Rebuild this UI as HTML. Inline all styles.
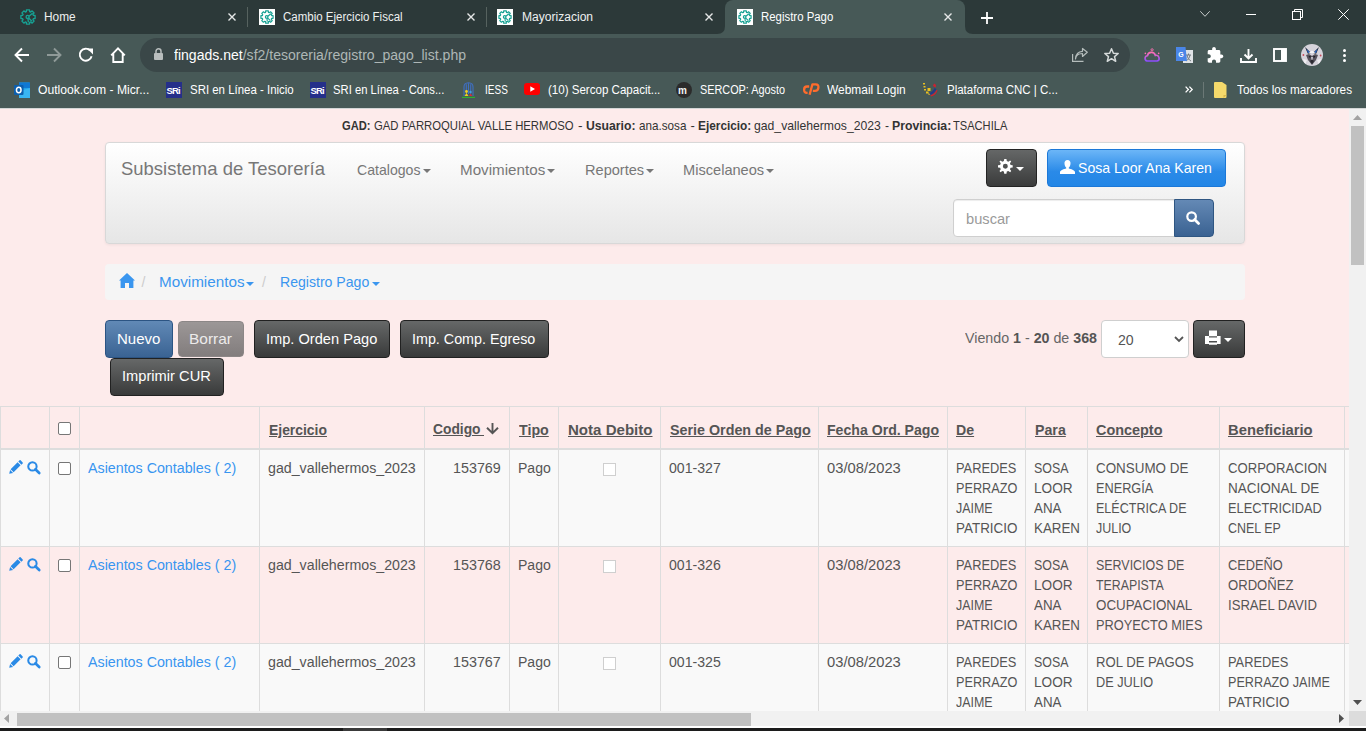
<!DOCTYPE html>
<html><head><meta charset="utf-8">
<style>
*{box-sizing:border-box}
html,body{margin:0;padding:0}
body{width:1366px;height:731px;overflow:hidden;position:relative;font-family:"Liberation Sans",sans-serif;background:#fdebeb}
.a{position:absolute}
.t{position:absolute;white-space:pre;line-height:1;font-family:"Liberation Sans",sans-serif}
svg{position:absolute;overflow:visible}
</style></head>
<body>
<div class="a" style="left:0;top:0;width:1366px;height:34px;background:#2c3939"></div>
<div class="a" style="left:0;top:34px;width:1366px;height:74px;background:#475957"></div>
<div class="a" style="left:725px;top:0;width:240px;height:34px;background:#475957;border-radius:8px 8px 0 0"></div>
<svg style="left:717px;top:26px" width="8" height="8"><path d="M0 8 Q8 8 8 0 L8 8 Z" fill="#475957"/></svg>
<svg style="left:965px;top:26px" width="8" height="8"><path d="M8 8 Q0 8 0 0 L0 8 Z" fill="#475957"/></svg>
<div class="a" style="left:247px;top:7px;width:1px;height:20px;background:#56625f"></div>
<div class="a" style="left:486px;top:7px;width:1px;height:20px;background:#56625f"></div>
<svg style="left:20px;top:9px" width="16" height="16" viewBox="0 0 16 16"><g><g fill="none" stroke="#17a193" stroke-width="1.35" stroke-linejoin="round"><path d="M6.36 2.64 L6.42 0.9 L9.58 0.9 L9.64 2.64 L10.63 3.06 L12.14 1.9 L14.1 3.86 L12.94 5.37 L13.36 6.36 L15.1 6.42 L15.1 9.58 L13.36 9.64 L12.94 10.63 L14.1 12.14 L12.14 14.1 L10.63 12.94 L9.64 13.36 L9.58 15.1 L6.42 15.1 L6.36 13.36 L5.37 12.94 L3.86 14.1 L1.9 12.14 L3.06 10.63 L2.64 9.64 L0.9 9.58 L0.9 6.42 L2.64 6.36 L3.06 5.37 L1.9 3.86 L3.86 1.9 L5.37 3.06 Z"/><circle cx="7.6" cy="7.9" r="1.5"/><path d="M8.9 7.2 L12.6 4.2 M7.9 9.4 L8.4 13.4 M8.6 9 L12 12.2"/></g></g></svg>
<svg style="left:228px;top:13px" width="8" height="8" viewBox="0 0 8 8"><path d="M0.5 0.5 L7.5 7.5 M7.5 0.5 L0.5 7.5" stroke="#e6e8e8" stroke-width="1.4"/></svg>
<svg style="left:259px;top:9px" width="16" height="16" viewBox="0 0 16 16"><rect x="0" y="0" width="16" height="16" fill="#fff"/><g transform="translate(8 8) scale(0.86) translate(-8 -8)"><g fill="none" stroke="#17a193" stroke-width="1.35" stroke-linejoin="round"><path d="M6.36 2.64 L6.42 0.9 L9.58 0.9 L9.64 2.64 L10.63 3.06 L12.14 1.9 L14.1 3.86 L12.94 5.37 L13.36 6.36 L15.1 6.42 L15.1 9.58 L13.36 9.64 L12.94 10.63 L14.1 12.14 L12.14 14.1 L10.63 12.94 L9.64 13.36 L9.58 15.1 L6.42 15.1 L6.36 13.36 L5.37 12.94 L3.86 14.1 L1.9 12.14 L3.06 10.63 L2.64 9.64 L0.9 9.58 L0.9 6.42 L2.64 6.36 L3.06 5.37 L1.9 3.86 L3.86 1.9 L5.37 3.06 Z"/><circle cx="7.6" cy="7.9" r="1.5"/><path d="M8.9 7.2 L12.6 4.2 M7.9 9.4 L8.4 13.4 M8.6 9 L12 12.2"/></g></g></svg>
<svg style="left:467px;top:13px" width="8" height="8" viewBox="0 0 8 8"><path d="M0.5 0.5 L7.5 7.5 M7.5 0.5 L0.5 7.5" stroke="#e6e8e8" stroke-width="1.4"/></svg>
<svg style="left:497px;top:9px" width="16" height="16" viewBox="0 0 16 16"><rect x="0" y="0" width="16" height="16" fill="#fff"/><g transform="translate(8 8) scale(0.86) translate(-8 -8)"><g fill="none" stroke="#17a193" stroke-width="1.35" stroke-linejoin="round"><path d="M6.36 2.64 L6.42 0.9 L9.58 0.9 L9.64 2.64 L10.63 3.06 L12.14 1.9 L14.1 3.86 L12.94 5.37 L13.36 6.36 L15.1 6.42 L15.1 9.58 L13.36 9.64 L12.94 10.63 L14.1 12.14 L12.14 14.1 L10.63 12.94 L9.64 13.36 L9.58 15.1 L6.42 15.1 L6.36 13.36 L5.37 12.94 L3.86 14.1 L1.9 12.14 L3.06 10.63 L2.64 9.64 L0.9 9.58 L0.9 6.42 L2.64 6.36 L3.06 5.37 L1.9 3.86 L3.86 1.9 L5.37 3.06 Z"/><circle cx="7.6" cy="7.9" r="1.5"/><path d="M8.9 7.2 L12.6 4.2 M7.9 9.4 L8.4 13.4 M8.6 9 L12 12.2"/></g></g></svg>
<svg style="left:705px;top:13px" width="8" height="8" viewBox="0 0 8 8"><path d="M0.5 0.5 L7.5 7.5 M7.5 0.5 L0.5 7.5" stroke="#e6e8e8" stroke-width="1.4"/></svg>
<svg style="left:737px;top:9px" width="16" height="16" viewBox="0 0 16 16"><rect x="0" y="0" width="16" height="16" fill="#fff"/><g transform="translate(8 8) scale(0.86) translate(-8 -8)"><g fill="none" stroke="#17a193" stroke-width="1.35" stroke-linejoin="round"><path d="M6.36 2.64 L6.42 0.9 L9.58 0.9 L9.64 2.64 L10.63 3.06 L12.14 1.9 L14.1 3.86 L12.94 5.37 L13.36 6.36 L15.1 6.42 L15.1 9.58 L13.36 9.64 L12.94 10.63 L14.1 12.14 L12.14 14.1 L10.63 12.94 L9.64 13.36 L9.58 15.1 L6.42 15.1 L6.36 13.36 L5.37 12.94 L3.86 14.1 L1.9 12.14 L3.06 10.63 L2.64 9.64 L0.9 9.58 L0.9 6.42 L2.64 6.36 L3.06 5.37 L1.9 3.86 L3.86 1.9 L5.37 3.06 Z"/><circle cx="7.6" cy="7.9" r="1.5"/><path d="M8.9 7.2 L12.6 4.2 M7.9 9.4 L8.4 13.4 M8.6 9 L12 12.2"/></g></g></svg>
<svg style="left:944px;top:13px" width="8" height="8" viewBox="0 0 8 8"><path d="M0.5 0.5 L7.5 7.5 M7.5 0.5 L0.5 7.5" stroke="#e6e8e8" stroke-width="1.4"/></svg>
<svg style="left:981px;top:12px" width="12" height="12" viewBox="0 0 12 12"><path d="M6 0 V12 M0 6 H12" stroke="#fff" stroke-width="1.8"/></svg>
<svg style="left:1200px;top:11px" width="10" height="6" viewBox="0 0 10 6"><path d="M0.3 0.3 L5 5.3 L9.7 0.3" fill="none" stroke="#c8cccc" stroke-width="1"/></svg>
<div class="a" style="left:1246px;top:14px;width:10px;height:1px;background:#fff"></div>
<svg style="left:1292px;top:9px" width="11" height="11" viewBox="0 0 11 11"><rect x="0.5" y="2.5" width="8" height="8" fill="none" stroke="#fff"/><path d="M2.5 2.5 V0.5 H10.5 V8.5 H8.5" fill="none" stroke="#fff"/></svg>
<svg style="left:1338px;top:9px" width="11" height="11" viewBox="0 0 11 11"><path d="M0.3 0.3 L10.7 10.7 M10.7 0.3 L0.3 10.7" stroke="#fff" stroke-width="1"/></svg>
<svg style="left:14px;top:47px" width="16" height="16" viewBox="0 0 16 16"><path d="M15 8 H2 M8 1.5 L1.5 8 L8 14.5" fill="none" stroke="#fff" stroke-width="1.9"/></svg>
<svg style="left:46px;top:47px" width="16" height="16" viewBox="0 0 16 16"><path d="M1 8 H14 M8 1.5 L14.5 8 L8 14.5" fill="none" stroke="#8f9a98" stroke-width="1.9"/></svg>
<svg style="left:78px;top:47px" width="16" height="16" viewBox="0 0 16 16"><path d="M13.6 9.2 A6 6 0 1 1 12.2 3.6" fill="none" stroke="#fff" stroke-width="1.9"/><path d="M9.2 1.6 H15 V7.4 Z" fill="#fff"/></svg>
<svg style="left:110px;top:47px" width="16" height="16" viewBox="0 0 16 16"><path d="M1.2 8.3 L8 1.4 L14.8 8.3 M3.3 6.5 V15 H12.7 V6.5" fill="none" stroke="#fff" stroke-width="1.9" stroke-linejoin="miter"/></svg>
<div class="a" style="left:140px;top:38px;width:990px;height:34px;border-radius:17px;background:#3a4748"></div>
<svg style="left:154px;top:48px" width="9" height="12" viewBox="0 0 9 12"><path d="M2 5 V3.3 A2.5 2.5 0 0 1 7 3.3 V5" fill="none" stroke="#b8bdbd" stroke-width="1.5"/><rect x="0" y="5" width="9" height="7" rx="1" fill="#b8bdbd"/></svg>
<svg style="left:1072px;top:49px" width="16" height="13" viewBox="0 0 16 13"><path d="M0.6 5 V12.4 H11.5" fill="none" stroke="#b5bdbc" stroke-width="1.2"/><path d="M3.5 10 C4 6 7 4.5 10.5 4.5 V7.5 L15.3 3.3 L10.5 -0.5 V2.3 C6 2.5 3.8 5.5 3.5 10 Z" fill="none" stroke="#b5bdbc" stroke-width="1.2" stroke-linejoin="round"/></svg>
<svg style="left:1104px;top:48px" width="15" height="14" viewBox="0 0 15 14"><path d="M7.5 0.8 L9.4 5.2 L14.2 5.5 L10.5 8.6 L11.7 13.3 L7.5 10.7 L3.3 13.3 L4.5 8.6 L0.8 5.5 L5.6 5.2 Z" fill="none" stroke="#d5dada" stroke-width="1.5" stroke-linejoin="round"/></svg>
<svg style="left:1143.5px;top:48.3px" width="16.2" height="14.4" viewBox="0 0 18 16"><defs><linearGradient id="cg" x1="0" y1="0" x2="0" y2="1"><stop offset="0" stop-color="#ff6fb5"/><stop offset="1" stop-color="#8a4dff"/></linearGradient></defs><path d="M3.5 14.5 A3 3 0 0 1 3.8 8.6 A4.5 4.5 0 0 1 12.6 8.3 A3.1 3.1 0 0 1 14.5 14.5 Z" fill="none" stroke="url(#cg)" stroke-width="1.8"/><circle cx="9" cy="2" r="1.2" fill="none" stroke="#ff6fb5" stroke-width="1"/><circle cx="1.5" cy="6" r="0.9" fill="#ff6fb5"/><circle cx="16.3" cy="6" r="0.9" fill="#ff6fb5"/></svg>
<svg style="left:1176px;top:47px" width="17" height="16" viewBox="0 0 17 16"><rect x="7" y="3" width="10" height="13" fill="#dfe3e6"/><path d="M10 8 H15 M12.5 6.5 V8 M11 8 C11.5 11 13 13 15 14 M14 8 C13.5 11 12 13 10 14" stroke="#6b7278" stroke-width="0.9" fill="none"/><path d="M0 0 H9.5 L11 14 H0 Z" fill="#4a86e8"/><text x="2.2" y="10" font-size="7" font-weight="bold" fill="#fff" font-family="Liberation Sans">G</text></svg>
<svg style="left:1207px;top:47px" width="17" height="16" viewBox="1.5 1 22 21.5"><path fill="#fff" d="M20.5 11H19V7c0-1.1-.9-2-2-2h-4V3.5C13 2.12 11.88 1 10.5 1S8 2.12 8 3.5V5H4c-1.1 0-1.99.9-1.99 2v3.8H3.5c1.49 0 2.7 1.21 2.7 2.7s-1.21 2.7-2.7 2.7H2V20c0 1.1.9 2 2 2h3.8v-1.5c0-1.490 1.21-2.7 2.7-2.7 1.49 0 2.7 1.21 2.7 2.7V22H17c1.1 0 2-.9 2-2v-4h1.5c1.38 0 2.5-1.12 2.5-2.5S21.88 11 20.5 11z"/></svg>
<svg style="left:1240px;top:49px" width="17" height="14" viewBox="0 0 17 14"><path d="M8.5 0 V9 M4.5 5.5 L8.5 9.5 L12.5 5.5" fill="none" stroke="#fff" stroke-width="1.9"/><path d="M1 9 V13 H16 V9" fill="none" stroke="#fff" stroke-width="1.9"/></svg>
<svg style="left:1273px;top:48px" width="14" height="14" viewBox="0 0 14 14"><rect x="1" y="1" width="12" height="12" fill="none" stroke="#fff" stroke-width="1.9"/><rect x="8" y="1" width="5" height="12" fill="#fff"/></svg>
<svg style="left:1301px;top:44px" width="22" height="22" viewBox="0 0 22 22"><defs><clipPath id="avc"><circle cx="11" cy="11" r="11"/></clipPath></defs><g clip-path="url(#avc)"><rect width="22" height="22" fill="#d6d3db"/><path d="M4 3 L10 9 L7 10 Z" fill="#101828"/><path d="M18 3 L12 9 L15 10 Z" fill="#101828"/><path d="M5.5 5 L9 8.5 L7 9 Z" fill="#2f6fd0"/><path d="M16.5 5 L13 8.5 L15 9 Z" fill="#2f6fd0"/><path d="M11 6.5 L15 9.5 L11 9 L7 9.5 Z" fill="#f4f4f6"/><path d="M5 11 L8 10 L11 12 L14 10 L17 11 L15 16 L11 21 L7 16 Z" fill="#55525c"/><path d="M7.5 12 L10 12.5 L9 14 Z M14.5 12 L12 12.5 L13 14 Z" fill="#14141a"/><path d="M10 13 H12 L11.5 16 H10.5 Z" fill="#c9c6cf"/><path d="M9 17 L11 15.5 L13 17 L11 20 Z" fill="#2c2a32"/><path d="M2 15 L6 16 L4 21 Z M20 15 L16 16 L18 21 Z" fill="#f0eef2"/><circle cx="2.4" cy="11" r="0.9" fill="#c84a5a"/><circle cx="19.6" cy="11.5" r="0.9" fill="#c84a5a"/></g></svg>
<div class="a" style="left:1343px;top:49px;width:3px;height:3px;border-radius:50%;background:#fff"></div>
<div class="a" style="left:1343px;top:54px;width:3px;height:3px;border-radius:50%;background:#fff"></div>
<div class="a" style="left:1343px;top:59px;width:3px;height:3px;border-radius:50%;background:#fff"></div>
<svg style="left:14px;top:82px" width="16" height="16" viewBox="0 0 16 16"><path d="M5 0.5 H15 Q16 0.5 16 1.5 V15 Q16 16 15 16 H6 Q5 16 5 15 Z" fill="#1fa1e8"/><path d="M5 0.5 H16 V6 H5 Z" fill="#0f78d4"/><path d="M5 9 L16 6 V16 H5 Z" fill="#39b5f2"/><rect x="0" y="3" width="9.5" height="10" rx="1" fill="#0c5fae"/><ellipse cx="4.75" cy="8" rx="2.3" ry="2.7" fill="none" stroke="#fff" stroke-width="1.5"/></svg>
<svg style="left:166px;top:82px" width="16" height="16" viewBox="0 0 16 16"><rect x="0" y="0" width="16" height="16" fill="#252f8a"/><text x="0.4" y="11.8" font-size="9.5" font-weight="bold" fill="#fff" font-family="Liberation Sans" letter-spacing="-0.8">SRi</text></svg>
<svg style="left:310px;top:82px" width="16" height="16" viewBox="0 0 16 16"><rect x="0" y="0" width="16" height="16" fill="#252f8a"/><text x="0.4" y="11.8" font-size="9.5" font-weight="bold" fill="#fff" font-family="Liberation Sans" letter-spacing="-0.8">SRi</text></svg>
<svg style="left:462px;top:82px" width="13" height="16" viewBox="0 0 13 16"><path d="M2 14 V5 Q2 1 6.5 0.8 Q11 1 11 5 V14" fill="none" stroke="#3f6fc4" stroke-width="1.1"/><path d="M4.3 12 V2.2 M6.5 12 V1.2 M8.7 12 V2.2" stroke="#3f6fc4" stroke-width="1.1"/><circle cx="4.5" cy="9.5" r="1.4" fill="#f0d020"/><path d="M2.5 14 L4.5 11 L6.5 14 Z" fill="#f0d020"/><circle cx="8.5" cy="10" r="1.2" fill="#40a0e0"/><path d="M6.8 14 L8.5 11.5 L10.5 14 Z" fill="#d03040"/><rect x="0" y="14.8" width="13" height="1.2" fill="#30b030"/></svg>
<svg style="left:524px;top:83px" width="16" height="12" viewBox="0 0 16 12"><rect x="0" y="0" width="16" height="12" rx="3" fill="#ff0000"/><path d="M6.3 3.3 L11 6 L6.3 8.7 Z" fill="#fff"/></svg>
<svg style="left:676px;top:82px" width="16" height="16" viewBox="0 0 16 16"><circle cx="8" cy="8" r="8" fill="#2b2b2b"/><text x="2" y="11.8" font-size="10" font-weight="bold" fill="#f3f3f3" font-family="Liberation Sans">m</text></svg>
<svg style="left:803px;top:83px" width="17" height="13" viewBox="0 0 17 13"><path d="M6.2 3.5 H4 Q1.2 3.5 1.1 6.6 Q1 9.8 3.8 9.8 H4.6 M6.6 11.8 L9.4 1.4 H12.8 Q15.8 1.4 15.4 4.6 Q15 7.9 12 7.9 H9.8" fill="none" stroke="#ff6c2c" stroke-width="2.3" stroke-linejoin="round"/></svg>
<svg style="left:922px;top:82px" width="16" height="16" viewBox="0 0 16 16"><g fill="#e8c020"><rect x="1" y="1" width="2" height="1.5"/><rect x="1.5" y="4" width="2" height="1.5"/><rect x="2" y="7" width="2" height="1.5"/><rect x="4" y="9.5" width="2.5" height="2"/><rect x="5.5" y="6" width="3" height="3"/><rect x="6.5" y="11" width="2" height="2"/></g><path d="M12 1.5 Q15 2.5 13.5 5.5 L11 4 Z" fill="#d02030"/><path d="M8 13 Q12 12 14.5 7 L12.5 6 Q10.5 10.5 7 11 Z" fill="#223a8c"/><path d="M9 14.5 Q13.5 13.5 15.5 8.5 L14.5 8 Q12.5 12.5 8.5 13.2 Z" fill="#d02030"/></svg>
<svg style="left:1185px;top:86px" width="8" height="7" viewBox="0 0 8 7"><path d="M0.6 0.6 L3.4 3.5 L0.6 6.4 M4.4 0.6 L7.2 3.5 L4.4 6.4" fill="none" stroke="#fff" stroke-width="1.3"/></svg>
<div class="a" style="left:1203px;top:82px;width:1px;height:16px;background:#6b7876"></div>
<svg style="left:1214px;top:82px" width="13" height="16" viewBox="0 0 13 16"><path d="M0 1 Q0 0 1 0 H8 L12.5 3 V15 Q12.5 16 11.5 16 H1 Q0 16 0 15 Z" fill="#f5d96b"/><path d="M9.5 16 V13 H12.5" fill="#d9b84a"/></svg>
<div class="a" style="left:0;top:108px;width:1366px;height:1px;background:#d3d6d6"></div>
<div class="a" style="left:0;top:109px;width:1349px;height:602px;background:#fdebeb"></div>
<div class="a" style="left:105px;top:142px;width:1140px;height:102px;border:1px solid #d8d8d8;border-radius:4px;background:linear-gradient(#ffffff,#e6e6e6);box-shadow:0 1px 3px rgba(0,0,0,0.06)"></div>
<svg style="left:423.3px;top:169px" width="8" height="4" viewBox="0 0 8 4"><path d="M0 0 H8 L4 4 Z" fill="#777"/></svg>
<svg style="left:547px;top:169px" width="8" height="4" viewBox="0 0 8 4"><path d="M0 0 H8 L4 4 Z" fill="#777"/></svg>
<svg style="left:646px;top:169px" width="8" height="4" viewBox="0 0 8 4"><path d="M0 0 H8 L4 4 Z" fill="#777"/></svg>
<svg style="left:766px;top:169px" width="8" height="4" viewBox="0 0 8 4"><path d="M0 0 H8 L4 4 Z" fill="#777"/></svg>
<div class="a" style="left:986px;top:149px;width:51px;height:38px;border:1px solid #232323;border-radius:4px;background:linear-gradient(#656767,#3a3b3b)"></div>
<svg style="left:998.2px;top:159.3px" width="14.7" height="14.7" viewBox="0 0 16 16"><path fill="#fff" fill-rule="evenodd" d="M6.8 0 H9.2 L9.6 2.3 L11.3 3 L13.2 1.6 L14.4 2.8 L13 4.7 L13.7 6.4 L16 6.8 V9.2 L13.7 9.6 L13 11.3 L14.4 13.2 L13.2 14.4 L11.3 13 L9.6 13.7 L9.2 16 H6.8 L6.4 13.7 L4.7 13 L2.8 14.4 L1.6 13.2 L3 11.3 L2.3 9.6 L0 9.2 V6.8 L2.3 6.4 L3 4.7 L1.6 2.8 L2.8 1.6 L4.7 3 L6.4 2.3 Z M8 5.3 A2.7 2.7 0 1 0 8 10.7 A2.7 2.7 0 1 0 8 5.3 Z"/></svg>
<svg style="left:1016px;top:167px" width="8" height="4" viewBox="0 0 8 4"><path d="M0 0 H8 L4 4 Z" fill="#fff"/></svg>
<div class="a" style="left:1047px;top:149px;width:179px;height:38px;border:1px solid #1b78d8;border-radius:4px;background:linear-gradient(#6cb6f7,#2a8ae8 60%,#2286e6)"></div>
<svg style="left:1060px;top:160px" width="15" height="14" viewBox="0 0 15 14"><path fill="#fff" d="M7.5 0 C5.2 0 4.3 1.8 4.5 3.8 C4.6 5.6 5.5 7.2 6.2 7.6 V8.6 C4 9.2 0.4 10.2 0 12 V14 H15 V12 C14.6 10.2 11 9.2 8.8 8.6 V7.6 C9.5 7.2 10.4 5.6 10.5 3.8 C10.7 1.8 9.8 0 7.5 0 Z"/></svg>
<div class="a" style="left:953px;top:199px;width:222px;height:38px;border:1px solid #cfcfcf;border-radius:4px 0 0 4px;background:#fff;box-shadow:inset 0 1px 1px rgba(0,0,0,.075)"></div>
<div class="a" style="left:1174px;top:199px;width:40px;height:38px;border:1px solid #2f5682;border-radius:0 4px 4px 0;background:linear-gradient(#6489b5,#3a6292)"></div>
<svg style="left:1186px;top:211px" width="15.0" height="13.0" viewBox="0 0 15 13"><circle cx="5.6" cy="5.6" r="4.3" fill="none" stroke="#fff" stroke-width="2.2"/><path d="M8.6 8.6 L12.6 12.4" stroke="#fff" stroke-width="2.8" stroke-linecap="round"/></svg>
<div class="a" style="left:105px;top:264px;width:1140px;height:36px;border-radius:4px;background:#f5f5f5"></div>
<svg style="left:119px;top:273px" width="16" height="15" viewBox="0 0 16 15"><path fill="#3a96ef" d="M8 0 L16 7.6 L14.4 7.6 V15 H10 V10 H6 V15 H1.6 V7.6 H0 Z"/></svg>
<svg style="left:245.5px;top:282px" width="8" height="4" viewBox="0 0 8 4"><path d="M0 0 H8 L4 4 Z" fill="#3a96ef"/></svg>
<svg style="left:372px;top:282px" width="8" height="4" viewBox="0 0 8 4"><path d="M0 0 H8 L4 4 Z" fill="#3a96ef"/></svg>
<div class="a" style="left:105px;top:320px;width:68px;height:38px;border:1px solid #2c5483;border-radius:4px;background:linear-gradient(#6189b6,#3a6393)"></div>
<div class="a" style="left:178px;top:321px;width:66px;height:36px;border:1px solid #8c8787;border-radius:4px;background:linear-gradient(#9c9797,#827d7d)"></div>
<div class="a" style="left:254px;top:320px;width:136px;height:38px;border:1px solid #212121;border-radius:4px;background:linear-gradient(#666868,#393a3a)"></div>
<div class="a" style="left:400px;top:320px;width:149px;height:38px;border:1px solid #212121;border-radius:4px;background:linear-gradient(#666868,#393a3a)"></div>
<div class="a" style="left:110px;top:358px;width:114px;height:38px;border:1px solid #212121;border-radius:4px;background:linear-gradient(#666868,#393a3a)"></div>
<div class="a" style="left:1101px;top:320px;width:88px;height:38px;border:1px solid #cfcfcf;border-radius:4px;background:#fff"></div>
<svg style="left:1174px;top:336px" width="10" height="6" viewBox="0 0 10 6"><path d="M1 1 L5 5 L9 1" fill="none" stroke="#555" stroke-width="1.8"/></svg>
<div class="a" style="left:1193px;top:320px;width:52px;height:38px;border:1px solid #212121;border-radius:4px;background:linear-gradient(#666868,#393a3a)"></div>
<svg style="left:1205px;top:330px" width="16" height="15" viewBox="0 0 16 15"><path fill="#fff" fill-rule="evenodd" d="M4 0.6 H12 V6 H15.6 V14 H12 V14.8 H4 V14 H0 V6 H4 Z M4 6.3 V7.6 H12 V6.3 Z M4 11 V12.5 H12 V11 Z"/></svg>
<svg style="left:1224px;top:338px" width="8" height="4" viewBox="0 0 8 4"><path d="M0 0 H8 L4 4 Z" fill="#fff"/></svg>
<div class="a" style="left:0;top:450px;width:1349px;height:96px;background:#f9f9f9"></div>
<div class="a" style="left:0;top:644px;width:1349px;height:67px;background:#f9f9f9"></div>
<div class="a" style="left:0;top:406px;width:1349px;height:1px;background:#dddddd"></div>
<div class="a" style="left:0;top:448px;width:1349px;height:2px;background:#dddddd"></div>
<div class="a" style="left:0;top:546px;width:1349px;height:1px;background:#dddddd"></div>
<div class="a" style="left:0;top:643px;width:1349px;height:1px;background:#dddddd"></div>
<div class="a" style="left:0px;top:406px;width:1px;height:305px;background:#dddddd"></div>
<div class="a" style="left:49px;top:406px;width:1px;height:305px;background:#dddddd"></div>
<div class="a" style="left:79px;top:406px;width:1px;height:305px;background:#dddddd"></div>
<div class="a" style="left:259px;top:406px;width:1px;height:305px;background:#dddddd"></div>
<div class="a" style="left:424px;top:406px;width:1px;height:305px;background:#dddddd"></div>
<div class="a" style="left:509px;top:406px;width:1px;height:305px;background:#dddddd"></div>
<div class="a" style="left:558px;top:406px;width:1px;height:305px;background:#dddddd"></div>
<div class="a" style="left:660px;top:406px;width:1px;height:305px;background:#dddddd"></div>
<div class="a" style="left:818px;top:406px;width:1px;height:305px;background:#dddddd"></div>
<div class="a" style="left:947px;top:406px;width:1px;height:305px;background:#dddddd"></div>
<div class="a" style="left:1025px;top:406px;width:1px;height:305px;background:#dddddd"></div>
<div class="a" style="left:1087px;top:406px;width:1px;height:305px;background:#dddddd"></div>
<div class="a" style="left:1219px;top:406px;width:1px;height:305px;background:#dddddd"></div>
<div class="a" style="left:1344px;top:406px;width:1px;height:305px;background:#dddddd"></div>
<div class="a" style="left:58px;top:422px;width:13px;height:13px;border:1px solid #767676;border-radius:2px;background:#fff"></div>
<div class="a" style="left:479px;top:435px;width:5px;height:1px;background:#555"></div>
<svg style="left:486px;top:423px" width="13" height="11" viewBox="0 0 13 11"><path d="M6.5 0 V10 M1 4.8 L6.5 10.2 L12 4.8" fill="none" stroke="#555" stroke-width="1.9"/></svg>
<svg style="left:8.6px;top:460px" width="15" height="14" viewBox="0 0 15 14"><path fill="#2a8ae6" d="M0.2 13.8 L1.1 9.9 L4.1 12.9 Z M1.6 9.3 L8.6 2.3 L11.6 5.3 L4.6 12.3 Z M9.3 1.6 L10.6 0.3 Q11.1 -0.1 11.6 0.3 L13.7 2.4 Q14.1 2.9 13.7 3.4 L12.4 4.7 Z"/></svg>
<svg style="left:27.2px;top:460.6px" width="14.549999999999999" height="12.61" viewBox="0 0 15 13"><circle cx="5.6" cy="5.6" r="4.3" fill="none" stroke="#2a8ae6" stroke-width="2.1"/><path d="M8.6 8.6 L12.6 12.4" stroke="#2a8ae6" stroke-width="2.8" stroke-linecap="round"/></svg>
<div class="a" style="left:58px;top:462px;width:13px;height:13px;border:1px solid #767676;border-radius:2px;background:#fff"></div>
<div class="a" style="left:603px;top:462.5px;width:13px;height:13px;border:1px solid #cfcfcf;background:#fff"></div>
<svg style="left:8.6px;top:557px" width="15" height="14" viewBox="0 0 15 14"><path fill="#2a8ae6" d="M0.2 13.8 L1.1 9.9 L4.1 12.9 Z M1.6 9.3 L8.6 2.3 L11.6 5.3 L4.6 12.3 Z M9.3 1.6 L10.6 0.3 Q11.1 -0.1 11.6 0.3 L13.7 2.4 Q14.1 2.9 13.7 3.4 L12.4 4.7 Z"/></svg>
<svg style="left:27.2px;top:557.6px" width="14.549999999999999" height="12.61" viewBox="0 0 15 13"><circle cx="5.6" cy="5.6" r="4.3" fill="none" stroke="#2a8ae6" stroke-width="2.1"/><path d="M8.6 8.6 L12.6 12.4" stroke="#2a8ae6" stroke-width="2.8" stroke-linecap="round"/></svg>
<div class="a" style="left:58px;top:559px;width:13px;height:13px;border:1px solid #767676;border-radius:2px;background:#fff"></div>
<div class="a" style="left:603px;top:559.5px;width:13px;height:13px;border:1px solid #cfcfcf;background:#fff"></div>
<svg style="left:8.6px;top:654px" width="15" height="14" viewBox="0 0 15 14"><path fill="#2a8ae6" d="M0.2 13.8 L1.1 9.9 L4.1 12.9 Z M1.6 9.3 L8.6 2.3 L11.6 5.3 L4.6 12.3 Z M9.3 1.6 L10.6 0.3 Q11.1 -0.1 11.6 0.3 L13.7 2.4 Q14.1 2.9 13.7 3.4 L12.4 4.7 Z"/></svg>
<svg style="left:27.2px;top:654.6px" width="14.549999999999999" height="12.61" viewBox="0 0 15 13"><circle cx="5.6" cy="5.6" r="4.3" fill="none" stroke="#2a8ae6" stroke-width="2.1"/><path d="M8.6 8.6 L12.6 12.4" stroke="#2a8ae6" stroke-width="2.8" stroke-linecap="round"/></svg>
<div class="a" style="left:58px;top:656px;width:13px;height:13px;border:1px solid #767676;border-radius:2px;background:#fff"></div>
<div class="a" style="left:603px;top:656.5px;width:13px;height:13px;border:1px solid #cfcfcf;background:#fff"></div>
<span class="t" style="left:44.30px;top:11px;font-size:12px;font-weight:400;color:#eef0f0;transform:scaleX(0.9896);transform-origin:0 0;">Home</span>
<span class="t" style="left:283.30px;top:11px;font-size:12px;font-weight:400;color:#eef0f0;transform:scaleX(0.9594);transform-origin:0 0;">Cambio Ejercicio Fiscal</span>
<span class="t" style="left:522.00px;top:11px;font-size:12px;font-weight:400;color:#eef0f0;transform:scaleX(1.0054);transform-origin:0 0;">Mayorizacion</span>
<span class="t" style="left:761.30px;top:11px;font-size:12px;font-weight:400;color:#ffffff;transform:scaleX(0.9506);transform-origin:0 0;">Registro Pago</span>
<span class="t" style="left:174.20px;top:48px;font-size:14px;font-weight:400;color:#ffffff;transform:scaleX(1.0032);transform-origin:0 0;">fingads.net<span style="color:#aeb7b6">/sf2/tesoreria/registro_pago_list.php</span></span>
<span class="t" style="left:37.70px;top:84px;font-size:12px;font-weight:400;color:#ffffff;transform:scaleX(1.0120);transform-origin:0 0;">Outlook.com - Micr...</span>
<span class="t" style="left:189.60px;top:84px;font-size:12px;font-weight:400;color:#ffffff;transform:scaleX(0.9537);transform-origin:0 0;">SRI en Línea - Inicio</span>
<span class="t" style="left:333.30px;top:84px;font-size:12px;font-weight:400;color:#ffffff;transform:scaleX(0.9375);transform-origin:0 0;">SRI en Línea - Cons...</span>
<span class="t" style="left:484.56px;top:84px;font-size:12px;font-weight:400;color:#ffffff;transform:scaleX(0.8352);transform-origin:0 0;">IESS</span>
<span class="t" style="left:547.60px;top:84px;font-size:12px;font-weight:400;color:#ffffff;transform:scaleX(0.9623);transform-origin:0 0;">(10) Sercop Capacit...</span>
<span class="t" style="left:699.80px;top:84px;font-size:12px;font-weight:400;color:#ffffff;transform:scaleX(0.9050);transform-origin:0 0;">SERCOP: Agosto</span>
<span class="t" style="left:827.00px;top:84px;font-size:12px;font-weight:400;color:#ffffff;transform:scaleX(0.9939);transform-origin:0 0;">Webmail Login</span>
<span class="t" style="left:947.00px;top:84px;font-size:12px;font-weight:400;color:#ffffff;transform:scaleX(0.9578);transform-origin:0 0;">Plataforma CNC | C...</span>
<span class="t" style="left:1237.00px;top:84px;font-size:12px;font-weight:400;color:#ffffff;transform:scaleX(0.9797);transform-origin:0 0;">Todos los marcadores</span>
<span class="t" style="left:341.50px;top:119px;font-size:13px;font-weight:700;color:#333;transform:scaleX(0.8575);transform-origin:0 0;">GAD:</span>
<span class="t" style="left:374.00px;top:119px;font-size:13px;font-weight:400;color:#333;transform:scaleX(0.8697);transform-origin:0 0;">GAD PARROQUIAL VALLE HERMOSO</span>
<span class="t" style="left:577.90px;top:119px;font-size:13px;font-weight:400;color:#333;transform:scaleX(1.0500);transform-origin:0 0;">-</span>
<span class="t" style="left:585.90px;top:119px;font-size:13px;font-weight:700;color:#333;transform:scaleX(0.9389);transform-origin:0 0;">Usuario:</span>
<span class="t" style="left:639.00px;top:119px;font-size:13px;font-weight:400;color:#333;transform:scaleX(0.8985);transform-origin:0 0;">ana.sosa</span>
<span class="t" style="left:690.40px;top:119px;font-size:13px;font-weight:400;color:#333;transform:scaleX(1.0000);transform-origin:0 0;">-</span>
<span class="t" style="left:697.70px;top:119px;font-size:13px;font-weight:700;color:#333;transform:scaleX(0.9107);transform-origin:0 0;">Ejercicio:</span>
<span class="t" style="left:754.00px;top:119px;font-size:13px;font-weight:400;color:#333;transform:scaleX(0.9383);transform-origin:0 0;">gad_vallehermos_2023</span>
<span class="t" style="left:884.70px;top:119px;font-size:13px;font-weight:400;color:#333;transform:scaleX(0.9250);transform-origin:0 0;">-</span>
<span class="t" style="left:891.60px;top:119px;font-size:13px;font-weight:700;color:#333;transform:scaleX(0.9420);transform-origin:0 0;">Provincia:</span>
<span class="t" style="left:953.10px;top:119px;font-size:13px;font-weight:400;color:#333;transform:scaleX(0.8544);transform-origin:0 0;">TSACHILA</span>
<span class="t" style="left:120.60px;top:160px;font-size:18.6px;font-weight:400;color:#777;transform:scaleX(0.9936);transform-origin:0 0;">Subsistema de Tesorería</span>
<span class="t" style="left:356.90px;top:162px;font-size:15px;font-weight:400;color:#777;transform:scaleX(0.9397);transform-origin:0 0;">Catalogos</span>
<span class="t" style="left:459.99px;top:162px;font-size:15px;font-weight:400;color:#777;transform:scaleX(1.0122);transform-origin:0 0;">Movimientos</span>
<span class="t" style="left:584.93px;top:162px;font-size:15px;font-weight:400;color:#777;transform:scaleX(0.9720);transform-origin:0 0;">Reportes</span>
<span class="t" style="left:683.03px;top:162px;font-size:15px;font-weight:400;color:#777;transform:scaleX(0.9735);transform-origin:0 0;">Miscelaneos</span>
<span class="t" style="left:1077.90px;top:160px;font-size:15px;font-weight:400;color:#fff;transform:scaleX(0.9393);transform-origin:0 0;">Sosa Loor Ana Karen</span>
<span class="t" style="left:965.50px;top:211px;font-size:15px;font-weight:400;color:#9a9a9a;transform:scaleX(0.9772);transform-origin:0 0;">buscar</span>
<span class="t" style="left:141.50px;top:275px;font-size:14px;font-weight:400;color:#cccccc;">/</span>
<span class="t" style="left:158.98px;top:274px;font-size:15px;font-weight:400;color:#3a96ef;transform:scaleX(1.0158);transform-origin:0 0;">Movimientos</span>
<span class="t" style="left:262.00px;top:275px;font-size:14px;font-weight:400;color:#cccccc;">/</span>
<span class="t" style="left:279.56px;top:274px;font-size:15px;font-weight:400;color:#3a96ef;transform:scaleX(0.9391);transform-origin:0 0;">Registro Pago</span>
<span class="t" style="left:116.60px;top:331px;font-size:15px;font-weight:400;color:#fff;transform:scaleX(0.9996);transform-origin:0 0;">Nuevo</span>
<span class="t" style="left:188.57px;top:331px;font-size:15px;font-weight:400;color:#ecebeb;transform:scaleX(1.0325);transform-origin:0 0;">Borrar</span>
<span class="t" style="left:265.53px;top:331px;font-size:15px;font-weight:400;color:#fff;transform:scaleX(0.9744);transform-origin:0 0;">Imp. Orden Pago</span>
<span class="t" style="left:412.45px;top:331px;font-size:15px;font-weight:400;color:#fff;transform:scaleX(0.9541);transform-origin:0 0;">Imp. Comp. Egreso</span>
<span class="t" style="left:121.62px;top:368px;font-size:15px;font-weight:400;color:#fff;transform:scaleX(0.9779);transform-origin:0 0;">Imprimir CUR</span>
<span class="t" style="left:965.20px;top:331px;font-size:14.5px;font-weight:400;color:#666;transform:scaleX(0.9820);transform-origin:0 0;">Viendo <b style="color:#555">1</b> - <b style="color:#555">20</b> de <b style="color:#555">368</b></span>
<span class="t" style="left:1118.40px;top:332px;font-size:15px;font-weight:400;color:#555;transform:scaleX(0.9423);transform-origin:0 0;">20</span>
<span class="t" style="left:268.60px;top:423px;font-size:14px;font-weight:700;color:#555;transform:scaleX(0.9928);transform-origin:0 0;text-decoration:underline;">Ejercicio</span>
<span class="t" style="left:433.20px;top:422px;font-size:14px;font-weight:700;color:#555;transform:scaleX(0.9862);transform-origin:0 0;text-decoration:underline;">Codigo</span>
<span class="t" style="left:518.60px;top:423px;font-size:14px;font-weight:700;color:#555;transform:scaleX(1.0160);transform-origin:0 0;text-decoration:underline;">Tipo</span>
<span class="t" style="left:568.00px;top:423px;font-size:14px;font-weight:700;color:#555;transform:scaleX(1.0756);transform-origin:0 0;text-decoration:underline;">Nota Debito</span>
<span class="t" style="left:669.50px;top:423px;font-size:14px;font-weight:700;color:#555;transform:scaleX(1.0214);transform-origin:0 0;text-decoration:underline;">Serie Orden de Pago</span>
<span class="t" style="left:827.20px;top:423px;font-size:14px;font-weight:700;color:#555;transform:scaleX(1.0073);transform-origin:0 0;text-decoration:underline;">Fecha Ord. Pago</span>
<span class="t" style="left:956.20px;top:423px;font-size:14px;font-weight:700;color:#555;transform:scaleX(1.0105);transform-origin:0 0;text-decoration:underline;">De</span>
<span class="t" style="left:1034.60px;top:423px;font-size:14px;font-weight:700;color:#555;transform:scaleX(1.0140);transform-origin:0 0;text-decoration:underline;">Para</span>
<span class="t" style="left:1095.90px;top:423px;font-size:14px;font-weight:700;color:#555;transform:scaleX(1.0297);transform-origin:0 0;text-decoration:underline;">Concepto</span>
<span class="t" style="left:1228.30px;top:423px;font-size:14px;font-weight:700;color:#555;transform:scaleX(1.0555);transform-origin:0 0;text-decoration:underline;">Beneficiario</span>
<span class="t" style="left:88.10px;top:461px;font-size:14px;font-weight:400;color:#3895f0;transform:scaleX(1.0183);transform-origin:0 0;">Asientos Contables ( 2)</span>
<span class="t" style="left:268.00px;top:461px;font-size:14px;font-weight:400;color:#555;transform:scaleX(1.0153);transform-origin:0 0;">gad_vallehermos_2023</span>
<span class="t" style="left:452.98px;top:461px;font-size:14px;font-weight:400;color:#555;transform:scaleX(1.0233);transform-origin:0 0;">153769</span>
<span class="t" style="left:517.50px;top:461px;font-size:14px;font-weight:400;color:#555;transform:scaleX(1.0028);transform-origin:0 0;">Pago</span>
<span class="t" style="left:669.40px;top:461px;font-size:14px;font-weight:400;color:#555;transform:scaleX(1.0079);transform-origin:0 0;">001-327</span>
<span class="t" style="left:826.60px;top:461px;font-size:14px;font-weight:400;color:#555;transform:scaleX(1.0529);transform-origin:0 0;">03/08/2023</span>
<span class="t" style="left:956.00px;top:461px;font-size:14px;font-weight:400;color:#555;transform:scaleX(0.9174);transform-origin:0 0;">PAREDES</span>
<span class="t" style="left:956.00px;top:481px;font-size:14px;font-weight:400;color:#555;transform:scaleX(0.9074);transform-origin:0 0;">PERRAZO</span>
<span class="t" style="left:956.00px;top:501px;font-size:14px;font-weight:400;color:#555;transform:scaleX(0.8878);transform-origin:0 0;">JAIME</span>
<span class="t" style="left:956.00px;top:521px;font-size:14px;font-weight:400;color:#555;transform:scaleX(0.9596);transform-origin:0 0;">PATRICIO</span>
<span class="t" style="left:1034.00px;top:461px;font-size:14px;font-weight:400;color:#555;transform:scaleX(0.8846);transform-origin:0 0;">SOSA</span>
<span class="t" style="left:1034.00px;top:481px;font-size:14px;font-weight:400;color:#555;transform:scaleX(0.9724);transform-origin:0 0;">LOOR</span>
<span class="t" style="left:1034.00px;top:501px;font-size:14px;font-weight:400;color:#555;transform:scaleX(0.9508);transform-origin:0 0;">ANA</span>
<span class="t" style="left:1034.00px;top:521px;font-size:14px;font-weight:400;color:#555;transform:scaleX(0.9539);transform-origin:0 0;">KAREN</span>
<span class="t" style="left:1096.00px;top:461px;font-size:14px;font-weight:400;color:#555;transform:scaleX(0.9572);transform-origin:0 0;">CONSUMO DE</span>
<span class="t" style="left:1096.00px;top:481px;font-size:14px;font-weight:400;color:#555;transform:scaleX(0.9094);transform-origin:0 0;">ENERGÍA</span>
<span class="t" style="left:1096.00px;top:501px;font-size:14px;font-weight:400;color:#555;transform:scaleX(0.8949);transform-origin:0 0;">ELÉCTRICA DE</span>
<span class="t" style="left:1096.00px;top:521px;font-size:14px;font-weight:400;color:#555;transform:scaleX(0.8898);transform-origin:0 0;">JULIO</span>
<span class="t" style="left:1228.00px;top:461px;font-size:14px;font-weight:400;color:#555;transform:scaleX(0.9362);transform-origin:0 0;">CORPORACION</span>
<span class="t" style="left:1228.00px;top:481px;font-size:14px;font-weight:400;color:#555;transform:scaleX(0.9661);transform-origin:0 0;">NACIONAL DE</span>
<span class="t" style="left:1228.00px;top:501px;font-size:14px;font-weight:400;color:#555;transform:scaleX(0.9136);transform-origin:0 0;">ELECTRICIDAD</span>
<span class="t" style="left:1228.00px;top:521px;font-size:14px;font-weight:400;color:#555;transform:scaleX(0.8897);transform-origin:0 0;">CNEL EP</span>
<span class="t" style="left:88.10px;top:558px;font-size:14px;font-weight:400;color:#3895f0;transform:scaleX(1.0183);transform-origin:0 0;">Asientos Contables ( 2)</span>
<span class="t" style="left:268.00px;top:558px;font-size:14px;font-weight:400;color:#555;transform:scaleX(1.0153);transform-origin:0 0;">gad_vallehermos_2023</span>
<span class="t" style="left:452.98px;top:558px;font-size:14px;font-weight:400;color:#555;transform:scaleX(1.0233);transform-origin:0 0;">153768</span>
<span class="t" style="left:517.50px;top:558px;font-size:14px;font-weight:400;color:#555;transform:scaleX(1.0028);transform-origin:0 0;">Pago</span>
<span class="t" style="left:669.40px;top:558px;font-size:14px;font-weight:400;color:#555;transform:scaleX(1.0079);transform-origin:0 0;">001-326</span>
<span class="t" style="left:826.60px;top:558px;font-size:14px;font-weight:400;color:#555;transform:scaleX(1.0529);transform-origin:0 0;">03/08/2023</span>
<span class="t" style="left:956.00px;top:558px;font-size:14px;font-weight:400;color:#555;transform:scaleX(0.9174);transform-origin:0 0;">PAREDES</span>
<span class="t" style="left:956.00px;top:578px;font-size:14px;font-weight:400;color:#555;transform:scaleX(0.9074);transform-origin:0 0;">PERRAZO</span>
<span class="t" style="left:956.00px;top:598px;font-size:14px;font-weight:400;color:#555;transform:scaleX(0.8878);transform-origin:0 0;">JAIME</span>
<span class="t" style="left:956.00px;top:618px;font-size:14px;font-weight:400;color:#555;transform:scaleX(0.9596);transform-origin:0 0;">PATRICIO</span>
<span class="t" style="left:1034.00px;top:558px;font-size:14px;font-weight:400;color:#555;transform:scaleX(0.8846);transform-origin:0 0;">SOSA</span>
<span class="t" style="left:1034.00px;top:578px;font-size:14px;font-weight:400;color:#555;transform:scaleX(0.9724);transform-origin:0 0;">LOOR</span>
<span class="t" style="left:1034.00px;top:598px;font-size:14px;font-weight:400;color:#555;transform:scaleX(0.9508);transform-origin:0 0;">ANA</span>
<span class="t" style="left:1034.00px;top:618px;font-size:14px;font-weight:400;color:#555;transform:scaleX(0.9539);transform-origin:0 0;">KAREN</span>
<span class="t" style="left:1096.00px;top:558px;font-size:14px;font-weight:400;color:#555;transform:scaleX(0.8880);transform-origin:0 0;">SERVICIOS DE</span>
<span class="t" style="left:1096.00px;top:578px;font-size:14px;font-weight:400;color:#555;transform:scaleX(0.8822);transform-origin:0 0;">TERAPISTA</span>
<span class="t" style="left:1096.00px;top:598px;font-size:14px;font-weight:400;color:#555;transform:scaleX(0.9546);transform-origin:0 0;">OCUPACIONAL</span>
<span class="t" style="left:1096.00px;top:618px;font-size:14px;font-weight:400;color:#555;transform:scaleX(0.9141);transform-origin:0 0;">PROYECTO MIES</span>
<span class="t" style="left:1228.00px;top:558px;font-size:14px;font-weight:400;color:#555;transform:scaleX(0.9149);transform-origin:0 0;">CEDEÑO</span>
<span class="t" style="left:1228.00px;top:578px;font-size:14px;font-weight:400;color:#555;transform:scaleX(0.9354);transform-origin:0 0;">ORDOÑEZ</span>
<span class="t" style="left:1228.00px;top:598px;font-size:14px;font-weight:400;color:#555;transform:scaleX(0.9372);transform-origin:0 0;">ISRAEL DAVID</span>
<span class="t" style="left:88.10px;top:655px;font-size:14px;font-weight:400;color:#3895f0;transform:scaleX(1.0183);transform-origin:0 0;">Asientos Contables ( 2)</span>
<span class="t" style="left:268.00px;top:655px;font-size:14px;font-weight:400;color:#555;transform:scaleX(1.0153);transform-origin:0 0;">gad_vallehermos_2023</span>
<span class="t" style="left:452.98px;top:655px;font-size:14px;font-weight:400;color:#555;transform:scaleX(1.0233);transform-origin:0 0;">153767</span>
<span class="t" style="left:517.50px;top:655px;font-size:14px;font-weight:400;color:#555;transform:scaleX(1.0028);transform-origin:0 0;">Pago</span>
<span class="t" style="left:669.40px;top:655px;font-size:14px;font-weight:400;color:#555;transform:scaleX(1.0079);transform-origin:0 0;">001-325</span>
<span class="t" style="left:826.60px;top:655px;font-size:14px;font-weight:400;color:#555;transform:scaleX(1.0529);transform-origin:0 0;">03/08/2023</span>
<span class="t" style="left:956.00px;top:655px;font-size:14px;font-weight:400;color:#555;transform:scaleX(0.9174);transform-origin:0 0;">PAREDES</span>
<span class="t" style="left:956.00px;top:675px;font-size:14px;font-weight:400;color:#555;transform:scaleX(0.9074);transform-origin:0 0;">PERRAZO</span>
<span class="t" style="left:956.00px;top:695px;font-size:14px;font-weight:400;color:#555;transform:scaleX(0.8878);transform-origin:0 0;">JAIME</span>
<span class="t" style="left:956.00px;top:715px;font-size:14px;font-weight:400;color:#555;transform:scaleX(0.9596);transform-origin:0 0;">PATRICIO</span>
<span class="t" style="left:1034.00px;top:655px;font-size:14px;font-weight:400;color:#555;transform:scaleX(0.8846);transform-origin:0 0;">SOSA</span>
<span class="t" style="left:1034.00px;top:675px;font-size:14px;font-weight:400;color:#555;transform:scaleX(0.9724);transform-origin:0 0;">LOOR</span>
<span class="t" style="left:1034.00px;top:695px;font-size:14px;font-weight:400;color:#555;transform:scaleX(0.9508);transform-origin:0 0;">ANA</span>
<span class="t" style="left:1034.00px;top:715px;font-size:14px;font-weight:400;color:#555;transform:scaleX(0.9539);transform-origin:0 0;">KAREN</span>
<span class="t" style="left:1096.00px;top:655px;font-size:14px;font-weight:400;color:#555;transform:scaleX(0.9378);transform-origin:0 0;">ROL DE PAGOS</span>
<span class="t" style="left:1096.00px;top:675px;font-size:14px;font-weight:400;color:#555;transform:scaleX(0.9079);transform-origin:0 0;">DE JULIO</span>
<span class="t" style="left:1228.00px;top:655px;font-size:14px;font-weight:400;color:#555;transform:scaleX(0.9174);transform-origin:0 0;">PAREDES</span>
<span class="t" style="left:1228.00px;top:675px;font-size:14px;font-weight:400;color:#555;transform:scaleX(0.9035);transform-origin:0 0;">PERRAZO JAIME</span>
<span class="t" style="left:1228.00px;top:695px;font-size:14px;font-weight:400;color:#555;transform:scaleX(0.9596);transform-origin:0 0;">PATRICIO</span>
<div class="a" style="left:1349px;top:109px;width:17px;height:602px;background:#f1f1f1"></div>
<div class="a" style="left:1351px;top:126px;width:13px;height:139px;background:#c1c1c1"></div>
<svg style="left:1353px;top:115px" width="9" height="5" viewBox="0 0 9 5"><path d="M0 5 L4.5 0 L9 5 Z" fill="#a3a3a3"/></svg>
<svg style="left:1353px;top:700px" width="9" height="5" viewBox="0 0 9 5"><path d="M0 0 L4.5 5 L9 0 Z" fill="#505050"/></svg>
<div class="a" style="left:0;top:711px;width:1349px;height:15px;background:#f1f1f1"></div>
<div class="a" style="left:17px;top:713px;width:734px;height:13px;background:#c1c1c1"></div>
<svg style="left:4px;top:714px" width="5" height="9" viewBox="0 0 5 9"><path d="M5 0 L0 4.5 L5 9 Z" fill="#a3a3a3"/></svg>
<svg style="left:1339px;top:714px" width="5" height="9" viewBox="0 0 5 9"><path d="M0 0 L5 4.5 L0 9 Z" fill="#505050"/></svg>
<div class="a" style="left:1349px;top:711px;width:17px;height:15px;background:#dcdcdc"></div>
<div class="a" style="left:0;top:726px;width:1366px;height:2px;background:#ffffff"></div>
<div class="a" style="left:0;top:728px;width:1366px;height:3px;background:#1c1c1c"></div>
<div class="a" style="left:343px;top:728px;width:44px;height:3px;background:#3a3a3a"></div>
</body></html>
